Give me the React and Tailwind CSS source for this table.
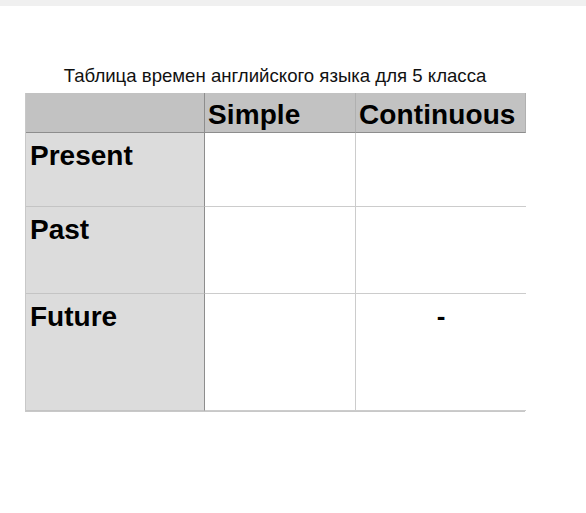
const columns = ["Simple", "Continuous"];

const rows = [
  { label: "Present", height: "h-[74px]", cells: ["", ""] },
  { label: "Past", height: "h-[87px]", cells: ["", ""] },
  { label: "Future", height: "h-[117px]", cells: ["", "-"] },
];

export default function App() {
  return (
    <div className="h-[513px] w-[586px] overflow-hidden bg-white font-['Liberation_Sans',Arial,sans-serif] text-black">
      <div className="h-[6px] bg-[#f0f0f0]" />

      <div className="pl-[25px] pt-[59px]">
        <p className="w-[500px] text-center text-[18.6px] leading-[22px] text-[#111]">
          Таблица времен английского языка для 5 класса
        </p>

        <div className="mt-[6px] grid w-[500px] grid-cols-[179px_151px_170px] border-r border-b border-l border-[#c8c8c8]">
          {/* header */}
          <div className="h-[40px] border-r border-b border-[#8d8d8d] bg-[#c2c2c2]" />
          {columns.map((col) => (
            <div
              key={col}
              className="flex h-[40px] items-end border-r border-b border-[#8d8d8d] border-r-[#b0b0b0] bg-[#c2c2c2] pb-[3px] pl-[3px] text-[28px] leading-none font-bold tracking-[0.1px] last:border-r-0"
            >
              {col}
            </div>
          ))}

          {rows.map((row) => (
            <div key={row.label} className="contents">
              <div
                className={`${row.height} border-r border-b border-[#8d8d8d] border-b-[#c4c4c4] bg-[#dcdcdc] pt-[9px] pl-[4px] text-[28px] leading-none font-bold`}
              >
                {row.label}
              </div>
              {row.cells.map((cell, i) => (
                <div
                  key={i}
                  className={`${row.height} border-b border-[#cccccc] bg-white pt-[9px] text-center text-[26px] leading-none font-bold ${
                    i === 0 ? "border-r" : ""
                  }`}
                >
                  {cell}
                </div>
              ))}
            </div>
          ))}
        </div>
      </div>
    </div>
  );
}
